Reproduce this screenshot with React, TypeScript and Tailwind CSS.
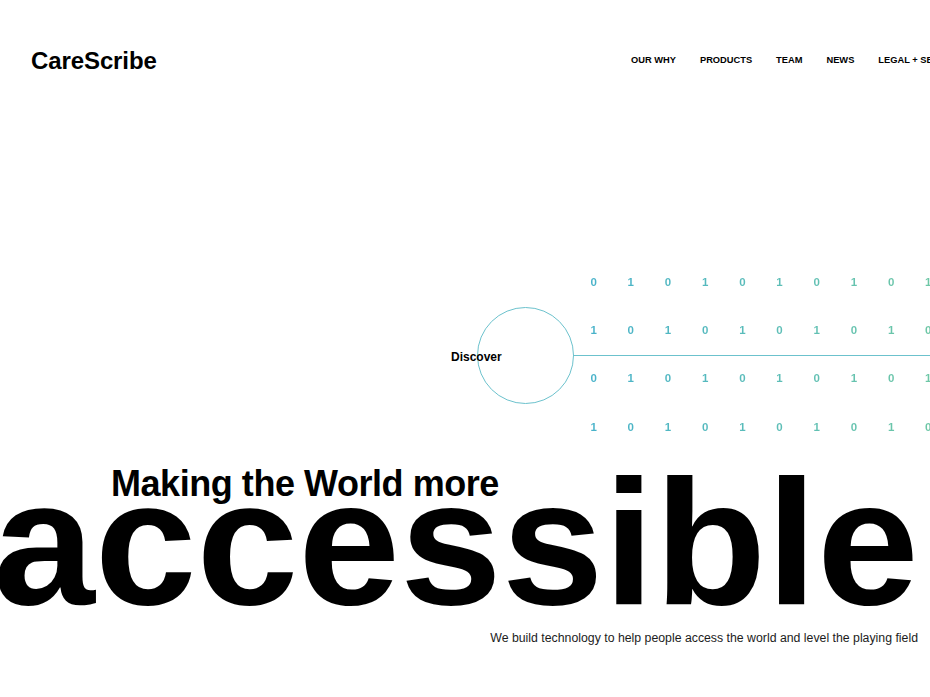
const font = "font-['Liberation_Sans',Arial,Helvetica,sans-serif]";

const navItems = ["Our Why", "Products", "Team", "News", "Legal + Security"];

const rows = [
  "0101010101",
  "1010101010",
  "0101010101",
  "1010101010",
];

export default function App() {
  return (
    <div className={`${font} relative h-[697px] w-[930px] overflow-hidden bg-white text-black`}>
      {/* Header */}
      <header className="flex h-[120px] items-center pl-[31px] pt-[1px]">
        <div className="w-[600px] shrink-0 text-[24px] font-bold tracking-[-0.1px]">CareScribe</div>
        <nav className="flex shrink-0 gap-[24px] whitespace-nowrap text-[9.3px] font-bold uppercase">
          {navItems.map((item) => (
            <a key={item} href="#">
              {item}
            </a>
          ))}
        </nav>
      </header>

      {/* Discover graphic */}
      <section className="relative pt-[138px]">
        <div className="ml-[575px] grid w-max grid-cols-[repeat(10,37.2px)] bg-gradient-to-r from-[#46b1cb] to-[#70c8a4] bg-clip-text text-[11.5px] font-bold text-transparent">
          {rows.map((row, r) =>
            row.split("").map((d, c) => (
              <span key={`${r}-${c}`} className="flex h-[48.4px] items-center justify-center">
                {d}
              </span>
            ))
          )}
        </div>

        <div className="absolute left-[477px] top-[187px] h-[97px] w-[97px] rounded-full border border-[#6cc2cd]" />
        <div className="absolute left-[573px] right-0 top-[235px] h-px bg-[#6cc2cd]" />
        <span className="absolute left-[451px] top-[229px] text-[12px] font-bold leading-[16px]">
          Discover
        </span>
      </section>

      {/* Headline */}
      <h1 className="ml-[111px] mt-[14px] text-[36px] font-bold leading-none tracking-[-0.45px]">
        Making the World more
      </h1>
      <div className="-ml-[7px] -mt-[9px] origin-left scale-x-[1.028] whitespace-nowrap text-[178px] font-bold leading-[100px]">
        accessible
      </div>

      <p className="mt-[37px] pr-[12px] text-right text-[12.3px] leading-[16px] text-[#1c1c1c]">
        We build technology to help people access the world and level the playing field
      </p>
    </div>
  );
}
